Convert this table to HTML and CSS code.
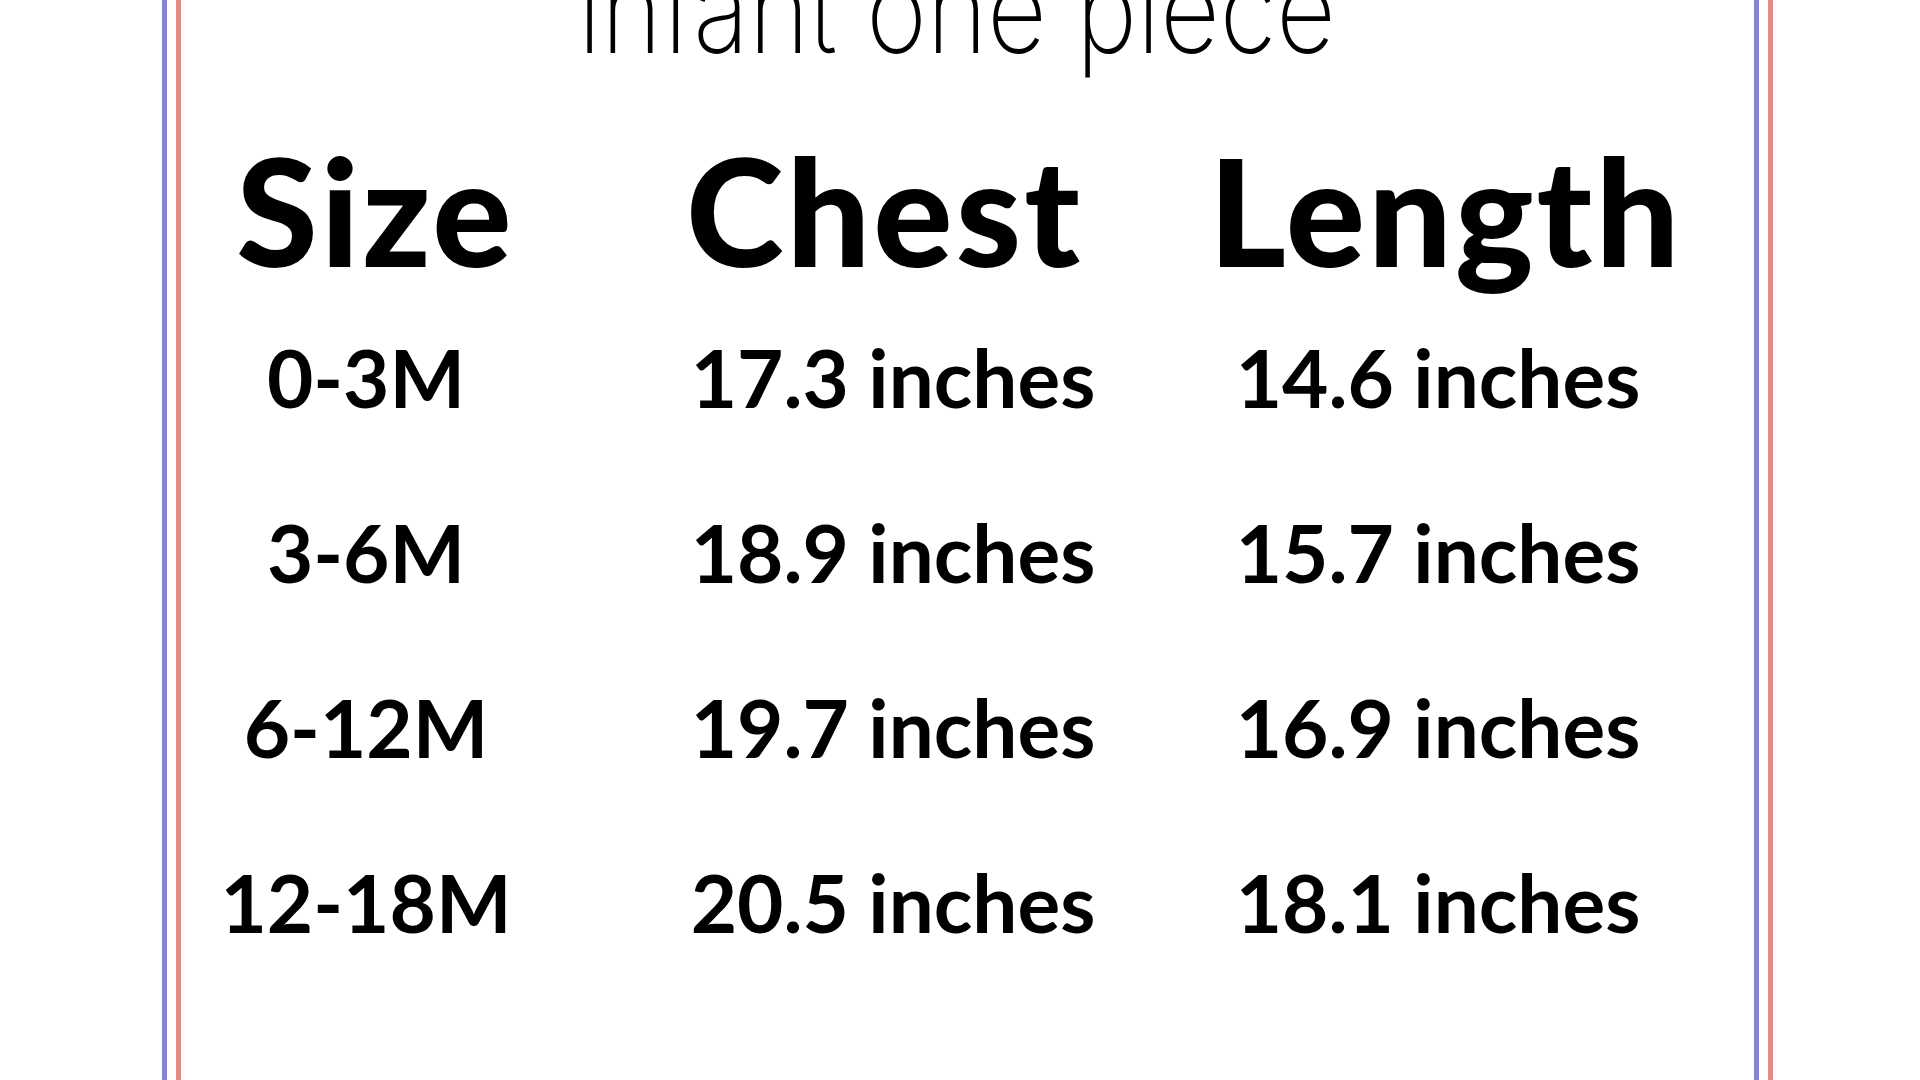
FILE: index.html
```html
<!DOCTYPE html>
<html lang="en">
<head>
<meta charset="utf-8">
<title>Infant one piece size chart</title>
<link rel="stylesheet" href="styles.css">
</head>
<body>
<div class="frame">
  <div class="inner">
    <h1 class="title"><span class="title-text">infant one piece</span></h1>
    <div class="chart">
      <div class="cell head h-size">Size</div>
      <div class="cell head h-chest">Chest</div>
      <div class="cell head h-length">Length</div>

      <div class="cell">0-3M</div>
      <div class="cell">17.3 inches</div>
      <div class="cell">14.6 inches</div>

      <div class="cell">3-6M</div>
      <div class="cell">18.9 inches</div>
      <div class="cell">15.7 inches</div>

      <div class="cell">6-12M</div>
      <div class="cell">19.7 inches</div>
      <div class="cell">16.9 inches</div>

      <div class="cell">12-18M</div>
      <div class="cell">20.5 inches</div>
      <div class="cell">18.1 inches</div>
    </div>
  </div>
</div>
</body>
</html>
```

FILE: styles.css
```css
html, body {
  margin: 0;
  padding: 0;
  background: #ffffff;
  overflow: hidden;
}

body {
  width: 1920px;
  height: 1080px;
  font-family: "Lato", "Liberation Sans", sans-serif;
  color: #000;
}

.frame {
  margin-left: 162px;
  width: 1611px;
  height: 1080px;
  box-sizing: border-box;
  border-left: 5px solid #8686d0;
  border-right: 5px solid #e48b84;
  padding: 0 9px;
}

.inner {
  height: 100%;
  box-sizing: border-box;
  border-left: 5px solid #e48b84;
  border-right: 5px solid #8686d0;
  overflow: hidden;
}

.title {
  margin: -52px 0 0 0;
  padding-left: 397px;
  font-family: "Inter", "Lato", sans-serif;
  font-weight: 200;
  font-size: 122px;
  line-height: 122px;
  white-space: nowrap;
}

.title-text {
  display: inline-block;
  transform: scaleX(0.847);
  transform-origin: left center;
}

.chart {
  display: grid;
  grid-template-columns: 370px 684px 406px;
  margin-top: 60px;
}

.cell {
  display: flex;
  justify-content: center;
  font-weight: 700;
  font-size: 80px;
  line-height: 175px;
  white-space: nowrap;
}

.head {
  font-weight: 900;
  font-size: 148px;
  line-height: 160px;
  letter-spacing: 3px;
}

.h-size { padding-left: 19px; }
.h-chest { padding-right: 17px; }
.h-length { padding-left: 15px; }
```
